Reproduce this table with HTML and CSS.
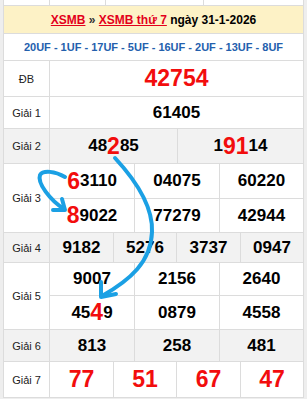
FILE: index.html
```html
<!DOCTYPE html>
<html lang="vi">
<head>
<meta charset="utf-8">
<title>XSMB thứ 7 ngày 31-1-2026</title>
<link rel="stylesheet" href="styles.css">
</head>
<body>
<div class="board">
  <div class="prev">
    <div></div><div></div><div></div><div></div>
  </div>
  <div class="title">
    <a class="lnk" href="#">XSMB</a>&nbsp;<span class="sep">»</span>&nbsp;<a class="lnk" href="#">XSMB thứ 7</a>&nbsp;ngày 31-1-2026
  </div>
  <div class="codes">20UF - 1UF - 17UF - 5UF - 16UF - 2UF - 13UF - 8UF</div>

  <div class="row r-db">
    <div class="label">ĐB</div>
    <div class="nums c1"><div class="n big">42754</div></div>
  </div>
  <div class="row r-g1">
    <div class="label">Giải 1</div>
    <div class="nums c1"><div class="n">61405</div></div>
  </div>
  <div class="row r-g2 alt">
    <div class="label">Giải 2</div>
    <div class="nums c2">
      <div class="n">48<span class="hi">2</span>85</div>
      <div class="n">1<span class="hi">91</span>14</div>
    </div>
  </div>
  <div class="row r-g3">
    <div class="label">Giải 3</div>
    <div class="nums c3 two">
      <div class="n"><span class="hi">6</span>3110</div>
      <div class="n">04075</div>
      <div class="n">60220</div>
      <div class="n"><span class="hi">8</span>9022</div>
      <div class="n">77279</div>
      <div class="n">42944</div>
    </div>
  </div>
  <div class="row r-g4 alt">
    <div class="label">Giải 4</div>
    <div class="nums c4">
      <div class="n">9182</div>
      <div class="n">5276</div>
      <div class="n">3737</div>
      <div class="n">0947</div>
    </div>
  </div>
  <div class="row r-g5">
    <div class="label">Giải 5</div>
    <div class="nums c3 two5">
      <div class="n">9007</div>
      <div class="n">2156</div>
      <div class="n">2640</div>
      <div class="n">45<span class="hi">4</span>9</div>
      <div class="n">0879</div>
      <div class="n">4558</div>
    </div>
  </div>
  <div class="row r-g6 alt">
    <div class="label">Giải 6</div>
    <div class="nums c3">
      <div class="n">813</div>
      <div class="n">258</div>
      <div class="n">481</div>
    </div>
  </div>
  <div class="row r-g7">
    <div class="label">Giải 7</div>
    <div class="nums c4">
      <div class="n red">77</div>
      <div class="n red">51</div>
      <div class="n red">67</div>
      <div class="n red">47</div>
    </div>
  </div>
</div>

<svg class="arrows" width="307" height="399" viewBox="0 0 307 399" xmlns="http://www.w3.org/2000/svg">
  <g fill="none" stroke="#1ba0e4" stroke-width="4" stroke-linecap="round" stroke-linejoin="round">
    <path d="M115,158 C140,185 153,210 152,232 C151,262 130,280 102,296"/>
    <path d="M101,282 L101,297 L116,294"/>
    <path d="M65,177 C55,171 43,170 40,175 C37,183 50,200 64,209"/>
    <path d="M53,210 L65,210 L62,199"/>
  </g>
</svg>
</body>
</html>
```

FILE: styles.css
```css
html, body {
  margin: 0;
  padding: 0;
}
body {
  background: #eeeeee;
  font-family: "Liberation Sans", Arial, sans-serif;
  width: 307px;
  height: 399px;
  overflow: hidden;
  position: relative;
}
.board {
  width: 301px;
  margin-left: 3px;
  box-sizing: border-box;
  background: #dcdcdc;
  padding: 0 1px 1px 1px;
  display: grid;
  row-gap: 1px;
}
.prev {
  height: 5px;
  display: grid;
  grid-template-columns: 45px 55px 97px 1fr;
  column-gap: 1px;
}
.prev div {
  background: #ffffff;
}
.title {
  height: 27px;
  background: #fdf2c6;
  display: flex;
  align-items: center;
  justify-content: center;
  font-size: 12px;
  font-weight: bold;
  color: #000;
  white-space: nowrap;
}
.lnk {
  color: #e3001b;
  text-decoration: underline;
}
.sep {
  color: #333;
}
.codes {
  height: 26px;
  background: #ffffff;
  display: flex;
  align-items: center;
  justify-content: center;
  font-size: 11px;
  font-weight: bold;
  color: #2360ad;
  white-space: nowrap;
}
.row {
  display: grid;
  grid-template-columns: 45px 1fr;
  column-gap: 1px;
}
.label {
  background: #ffffff;
  display: flex;
  align-items: center;
  justify-content: center;
  font-size: 11px;
  color: #222;
}
.nums {
  display: grid;
  gap: 1px;
}
.c1 { grid-template-columns: 1fr; }
.c2 { grid-template-columns: 127px 1fr; }
.c3 { grid-template-columns: 84px 84px 1fr; }
.c4 { grid-template-columns: 63px 62px 63px 1fr; }
.n {
  background: #ffffff;
  display: flex;
  align-items: center;
  justify-content: center;
  font-size: 17px;
  font-weight: bold;
  color: #000;
  white-space: nowrap;
}
.alt .label, .alt .n {
  background: #f2f2f2;
}
.hi {
  color: #f20d0d;
  font-size: 23px;
  line-height: 17px;
}
.big, .red {
  color: #f20d0d;
  font-size: 23px;
}
.r-db { height: 35px; }
.r-g1 { height: 31px; }
.r-g2 { height: 34px; }
.r-g3 { height: 68px; }
.two { grid-template-rows: 34px 1fr; }
.r-g4 { height: 29px; }
.r-g5 { height: 66px; }
.two5 { grid-template-rows: 32px 1fr; }
.r-g6 { height: 31px; }
.r-g7 { height: 35px; }
.arrows {
  position: absolute;
  left: 0;
  top: 0;
  pointer-events: none;
}
```
